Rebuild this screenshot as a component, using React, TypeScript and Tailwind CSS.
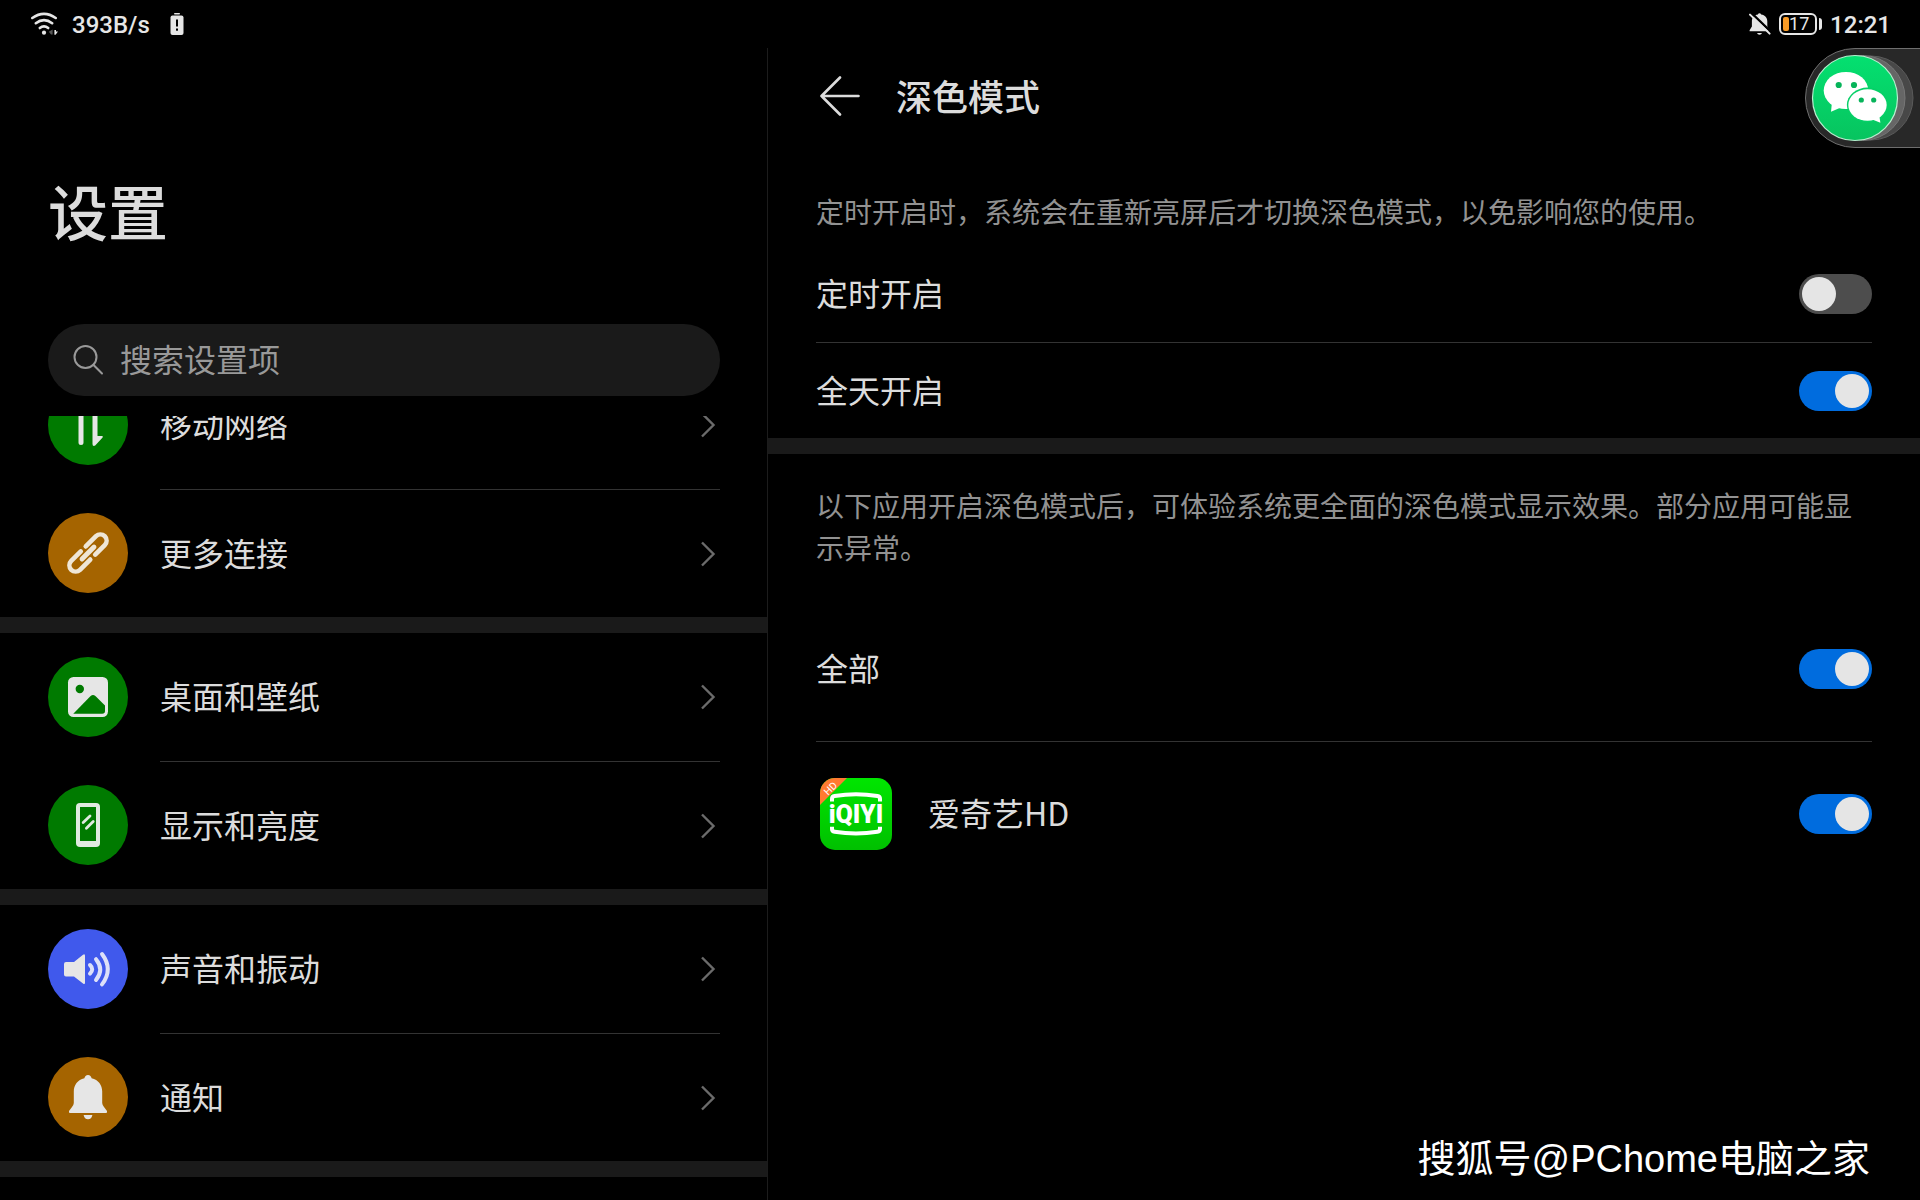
import React, { useState } from 'react';

type IconProps = { className?: string };

const WifiIcon = ({ className }: IconProps) => (
  <svg viewBox="0 0 28 24" fill="none" stroke="#e6e6e6" strokeWidth="2.6" strokeLinecap="round" className={className}>
    <path d="M2.3 6 Q14 -2.2 25.7 6" />
    <path d="M5.8 11.2 Q14 5 22.2 11.2" />
    <path d="M9.8 16 Q14 12.6 18.2 16" />
    <circle cx="14" cy="20.7" r="2.1" fill="#e6e6e6" stroke="none" />
    <path d="M22.6 17.5 V22.5 H21 L18.8 19.8Z" fill="#555" stroke="none" />
    <path d="M24.4 18 V22.8 H25.6 L28 19.6 H26 V18Z" fill="#e6e6e6" stroke="none" />
  </svg>
);

const BatteryAlertIcon = ({ className }: IconProps) => (
  <svg viewBox="0 0 14 22" className={className}>
    <rect x="4" y="0" width="6" height="1.6" rx="0.8" fill="#e6e6e6" />
    <rect x="0.5" y="2.4" width="13" height="19.6" rx="2" fill="#e6e6e6" />
    <path d="M7 6.5 V13.5" stroke="#000" strokeWidth="2" />
    <rect x="6" y="15.5" width="2" height="2.2" fill="#000" />
  </svg>
);

const BellOffIcon = ({ className }: IconProps) => (
  <svg viewBox="0 0 22 22" className={className}>
    <path d="M10.5 0.3 a1.8 1.8 0 0 1 1.6 1.2 C16 2 18.3 4.8 18.3 8.4 V13.5 L20.5 17.2 V18.3 H0.6 V17.2 L2.9 13.5 V8.4 C2.9 4.8 5.2 2 8.9 1.5 A1.8 1.8 0 0 1 10.5 0.3Z" fill="#e6e6e6" />
    <path d="M8 20 H13 Q12.4 21.8 10.5 21.8 Q8.6 21.8 8 20Z" fill="#e6e6e6" />
    <path d="M2.6 0.2 L22 18.8" stroke="#000" strokeWidth="2.4" />
    <path d="M1 1.6 L20.6 20.6" stroke="#e6e6e6" strokeWidth="2" strokeLinecap="round" />
  </svg>
);

const SearchIcon = ({ className }: IconProps) => (
  <svg viewBox="0 0 32 32" fill="none" stroke="#999" strokeWidth="2" strokeLinecap="round" className={className}>
    <circle cx="13.5" cy="13" r="11" />
    <path d="M21.3 20.8 L30 29.5" />
  </svg>
);

const ArrowLeftIcon = ({ className }: IconProps) => (
  <svg viewBox="0 0 40 40" fill="none" stroke="#dcdcdc" strokeWidth="2.6" strokeLinecap="round" strokeLinejoin="round" className={className}>
    <path d="M20 1.5 L1.5 20 L20 38.5 M1.5 20 H38.5" />
  </svg>
);

const ChevronIcon = ({ className }: IconProps) => (
  <svg viewBox="0 0 16 26" fill="none" stroke="#6b6b6b" strokeWidth="2.4" className={className}>
    <path d="M2 1.5 L13.5 13 L2 24.5" />
  </svg>
);

const MobileDataIcon = () => (
  <svg viewBox="0 0 80 80" fill="#e6e6e6" className="size-20">
    <path d="M35.5 57.5 Q35.5 60 33 60 Q30.5 60 30.5 57.5 V29 H26.4 Q24.6 29 25.6 27.6 L32.8 19.4 Q35.5 18.4 35.5 21Z" />
    <path d="M44.5 22.5 Q44.5 20 47 20 Q49.5 20 49.5 22.5 V51 H53.6 Q55.6 51 54.6 52.4 L47.2 60.6 Q44.5 61.6 44.5 59Z" />
  </svg>
);

const LinkIcon = () => (
  <svg viewBox="0 0 80 80" fill="none" stroke="#efe6d6" strokeWidth="4.6" strokeLinecap="round" className="size-20">
    <g transform="rotate(-45 40 40)">
      <path d="M43 33.8 H57.5 A6.2 6.2 0 0 1 57.5 46.2 H44" />
      <path d="M36 33.8 H22.5 A6.2 6.2 0 0 0 22.5 46.2 H37" />
      <path d="M31.5 40 H48.5" strokeWidth="4.8" />
    </g>
  </svg>
);

const WallpaperIcon = () => (
  <svg viewBox="0 0 80 80" className="size-20">
    <rect x="20" y="20" width="40" height="40" rx="5.5" fill="#e6e6e6" />
    <circle cx="31.8" cy="32" r="4.2" fill="#007a00" />
    <path d="M25.3 56.8 L42.6 39 Q45 36.8 47.4 39 L57 48.6 V54 Q57 56.8 54.2 56.8Z" fill="#007a00" />
  </svg>
);

const DisplayIcon = () => (
  <svg viewBox="0 0 80 80" className="size-20">
    <rect x="28" y="18" width="24" height="44" rx="4" fill="#e0eae0" />
    <rect x="32" y="22" width="16" height="34" fill="#007a00" />
    <path d="M35.2 37.5 L42 31 M38.4 43.2 L45.2 36.6" stroke="#e0eae0" strokeWidth="2.8" strokeLinecap="round" />
  </svg>
);

const SoundIcon = () => (
  <svg viewBox="0 0 80 80" fill="none" stroke="#dde0f8" strokeWidth="4" strokeLinecap="round" className="size-20">
    <path d="M16 35 Q16 33 18 33 H26 L35 25.8 Q37 24.4 37 26.8 V53.4 Q37 55.8 35 54.4 L26 47.6 H18 Q16 47.6 16 45.6Z" fill="#e6e6e6" stroke="none" />
    <path d="M42 36 Q46.4 40.2 42 44.6" />
    <path d="M48 30.2 Q56.4 40.4 48 51" />
    <path d="M54 25 Q65.6 40.4 54 55.4" />
  </svg>
);

const BellIcon = () => (
  <svg viewBox="0 0 80 80" fill="#e6e6e6" className="size-20">
    <path d="M40 18 A4 4 0 0 1 43.6 21.2 C50.4 22.8 54.2 28 54.2 34.5 V46 Q54.4 48.4 56 50 L59 54 Q59.6 56 58 56 H22 Q20.4 56 21 54 L24 50 Q25.6 48.4 25.8 46 V34.5 C25.8 28 29.6 22.8 36.4 21.2 A4 4 0 0 1 40 18Z" />
    <path d="M35.6 58 H44.4 Q43.6 62.2 40 62.2 Q36.4 62.2 35.6 58Z" />
  </svg>
);

const IqiyiLogo = ({ className }: IconProps) => (
  <svg viewBox="0 0 72 72" className={className}>
    <defs>
      <linearGradient id="iqiyi-bg" x1="0" y1="0" x2="0" y2="1">
        <stop offset="0" stopColor="#00e600" />
        <stop offset="1" stopColor="#00c000" />
      </linearGradient>
      <clipPath id="iqiyi-clip">
        <rect width="72" height="72" rx="15" />
      </clipPath>
    </defs>
    <g clipPath="url(#iqiyi-clip)">
      <rect width="72" height="72" fill="url(#iqiyi-bg)" />
      <path d="M0 0 H27 L0 27Z" fill="#ff7a30" />
      <text x="10.5" y="10.5" transform="rotate(-45 10.5 10.5)" textAnchor="middle" dominantBaseline="central" fontSize="10" fill="#fff" fontFamily="Roboto, sans-serif">HD</text>
    </g>
    <g fill="none" stroke="#fff" strokeWidth="4">
      <path d="M12 23.5 V21 Q12 18.4 14.6 18 Q36 14.4 57.4 18 Q60 18.4 60 21 V23.5" />
      <path d="M12 48.8 V51 Q12 53.4 14.6 53.8 Q36 57.4 57.4 53.8 Q60 53.4 60 51 V48.8" />
    </g>
    <text x="36" y="45" textAnchor="middle" fontSize="25" fontWeight="900" fill="#fff" fontFamily="Roboto, sans-serif">iQIYI</text>
  </svg>
);

const WechatDock = ({ className }: IconProps) => (
  <svg viewBox="0 0 115 100" className={className}>
    <defs>
      <linearGradient id="wechat-bg" x1="0" y1="0" x2="0" y2="1">
        <stop offset="0" stopColor="#04e070" />
        <stop offset="1" stopColor="#07c45f" />
      </linearGradient>
    </defs>
    <path d="M116 0.5 H50 A49.5 49.5 0 0 0 50 99.5 H116Z" fill="#282828" stroke="#6e6e6e" />
    <circle cx="66" cy="50" r="42" fill="#484848" stroke="#5a5a5a" />
    <circle cx="57.5" cy="50" r="42.5" fill="#666" stroke="#777" />
    <circle cx="50" cy="50" r="42.5" fill="url(#wechat-bg)" stroke="#b8f0d0" strokeWidth="1.2" />
    <ellipse cx="41" cy="42.5" rx="22.3" ry="18.6" fill="#fff" />
    <path d="M27 54 L26 63.8 L37 59Z" fill="#fff" />
    <ellipse cx="62.5" cy="57" rx="20.6" ry="17.4" fill="#06d067" />
    <ellipse cx="62.5" cy="57" rx="19.2" ry="15.8" fill="#fff" />
    <path d="M66 71 L75.4 74.8 L74 66Z" fill="#fff" />
    <g fill="#06b45a">
      <circle cx="33.7" cy="37" r="3.1" />
      <circle cx="49" cy="37" r="3.1" />
      <circle cx="56.3" cy="52" r="2.6" />
      <circle cx="68.7" cy="52" r="2.6" />
    </g>
  </svg>
);

type MenuItem = { label: string; color: string; icon: React.ReactNode };

const menuGroups: MenuItem[][] = [
  [
    { label: '移动网络', color: 'bg-[#007a00]', icon: <MobileDataIcon /> },
    { label: '更多连接', color: 'bg-[#a56400]', icon: <LinkIcon /> },
  ],
  [
    { label: '桌面和壁纸', color: 'bg-[#007a00]', icon: <WallpaperIcon /> },
    { label: '显示和亮度', color: 'bg-[#007a00]', icon: <DisplayIcon /> },
  ],
  [
    { label: '声音和振动', color: 'bg-[#4059ec]', icon: <SoundIcon /> },
    { label: '通知', color: 'bg-[#a56400]', icon: <BellIcon /> },
  ],
];

const StatusBar = () => (
  <header className="flex h-12 items-center justify-between pl-[30px] pr-[29px] font-['Roboto',sans-serif] text-2xl font-medium text-[#e6e6e6]">
    <div className="flex items-center">
      <WifiIcon className="h-6 w-7" />
      <span className="ml-3.5 pt-0.5">393B/s</span>
      <BatteryAlertIcon className="ml-5 h-[22px] w-3.5" />
    </div>
    <div className="flex items-center">
      <BellOffIcon className="mr-2 size-[22px]" />
      <div className="flex h-[22px] w-[38px] items-center rounded-md border-2 border-[#e6e6e6] pl-0.5">
        <span className="h-3.5 w-1.5 rounded-xs bg-[#f79a25]" />
        <span className="text-lg leading-none font-normal">17</span>
      </div>
      <span className="ml-0.5 mr-2 h-3 w-[3px] rounded-r-sm bg-[#e6e6e6]" />
      <span className="pt-0.5">12:21</span>
    </div>
  </header>
);

const MenuRow = ({ item, divided }: { item: MenuItem; divided: boolean }) => (
  <a href="#" className="flex h-32 items-center gap-8 pr-[47px] pl-12">
    <span className={`size-20 shrink-0 overflow-hidden rounded-full ${item.color}`}>{item.icon}</span>
    <span className={`flex h-full flex-1 items-center justify-between pr-1 ${divided ? 'border-t border-[#333]' : ''}`}>
      <span className="pb-1 text-[32px] leading-10">{item.label}</span>
      <ChevronIcon className="h-[26px] w-4" />
    </span>
  </a>
);

const Sidebar = () => (
  <aside className="flex w-2/5 shrink-0 flex-col border-r border-[#1c1c1c]">
    <h1 className="px-12 pt-[122px] text-[60px] leading-[80px] font-medium">设置</h1>
    <label className="mt-[74px] mr-[47px] ml-12 flex h-[72px] items-center rounded-full bg-[#1a1a1a] pl-6">
      <SearchIcon className="size-8" />
      <input
        type="search"
        aria-label="搜索设置项"
        placeholder="搜索设置项"
        className="ml-4 min-w-0 flex-1 bg-transparent pb-1 text-[32px] leading-10 outline-none placeholder:text-[#999]"
      />
    </label>
    {/* lista desplazada: la primera fila queda cortada */}
    <nav className="mt-5 overflow-hidden">
      <div className="-mt-[55px]">
        {menuGroups.map((group) => (
          <div key={group[0].label} className="border-b-16 border-[#1a1a1a]">
            {group.map((item, i) => (
              <MenuRow key={item.label} item={item} divided={i > 0} />
            ))}
          </div>
        ))}
      </div>
    </nav>
  </aside>
);

const Switch = ({ id, defaultOn }: { id: string; defaultOn: boolean }) => {
  const [on, setOn] = useState(defaultOn);
  return (
    <input
      id={id}
      type="checkbox"
      role="switch"
      checked={on}
      onChange={() => setOn(!on)}
      className="flex h-10 w-[73px] shrink-0 cursor-pointer appearance-none items-center rounded-full bg-[#4d4d4d] px-[3px] before:size-[34px] before:rounded-full before:bg-[#e5e5e5] checked:justify-end checked:bg-[#006cde]"
    />
  );
};

const DarkModePanel = () => (
  <main className="min-w-0 flex-1">
    <div className="flex h-24 items-center gap-9 px-[52px]">
      <button type="button" aria-label="返回">
        <ArrowLeftIcon className="size-10" />
      </button>
      <h2 className="pb-0.5 text-4xl font-medium">深色模式</h2>
    </div>

    <section className="border-b-16 border-[#1a1a1a] px-12 pt-[46px]">
      <p className="pb-3.5 text-[28px] leading-[42px] text-[#929292]">
        定时开启时，系统会在重新亮屏后才切换深色模式，以免影响您的使用。
      </p>
      <div className="flex h-24 items-center justify-between">
        <label htmlFor="scheduled" className="pb-1 text-[32px] leading-10">定时开启</label>
        <Switch id="scheduled" defaultOn={false} />
      </div>
      <div className="flex h-24 items-center justify-between border-t border-[#333]">
        <label htmlFor="all-day" className="pb-1 text-[32px] leading-10">全天开启</label>
        <Switch id="all-day" defaultOn />
      </div>
    </section>

    <section className="px-12 pt-[30px]">
      <p className="pb-7 text-[28px] leading-[42px] text-[#929292]">
        以下应用开启深色模式后，可体验系统更全面的深色模式显示效果。部分应用可能显示异常。
      </p>
      <div className="flex h-[145px] items-center justify-between">
        <label htmlFor="all-apps" className="pb-1 text-[32px] leading-10">全部</label>
        <Switch id="all-apps" defaultOn />
      </div>
      <div className="flex h-[145px] items-center justify-between border-t border-[#333]">
        <label htmlFor="iqiyi" className="flex items-center gap-9 pl-1 text-[32px] leading-10">
          <IqiyiLogo className="size-18" />
          <span className="pb-1">爱奇艺HD</span>
        </label>
        <Switch id="iqiyi" defaultOn />
      </div>
    </section>
  </main>
);

const App = () => {
  return (
    <div className="relative flex min-h-screen flex-col overflow-hidden bg-black font-['Noto_Sans_CJK_SC',sans-serif] text-[#dcdcdc]">
      <StatusBar />
      <div className="flex flex-1">
        <Sidebar />
        <DarkModePanel />
      </div>
      <button type="button" aria-label="微信" className="absolute top-12 right-0">
        <WechatDock className="h-[100px] w-[115px]" />
      </button>
      <p className="absolute right-[50px] bottom-3 font-['Liberation_Sans','Noto_Sans_CJK_SC',sans-serif] text-[38px] text-white">
        搜狐号@PChome电脑之家
      </p>
    </div>
  );
};

export default App;
